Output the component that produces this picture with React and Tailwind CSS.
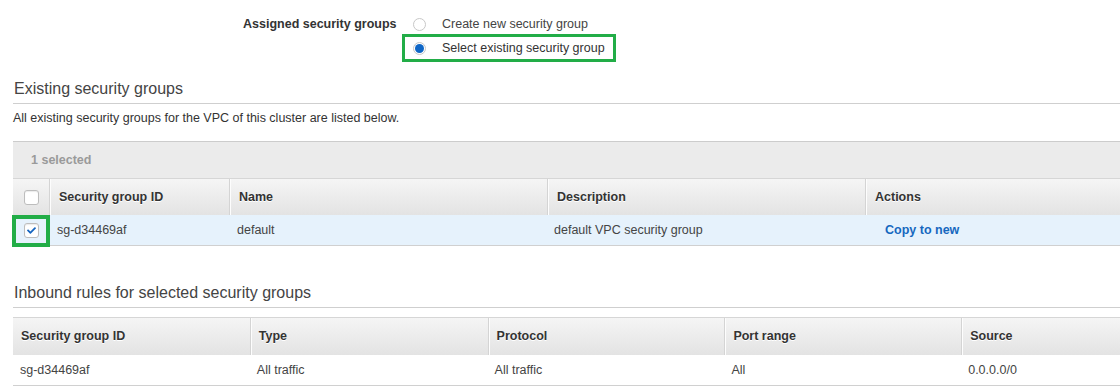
import { FaCheck } from "react-icons/fa";

const font = { fontFamily: '"Liberation Sans", Arial, sans-serif' };

const Radio = ({ checked }) => (
  <span className="w-[13px] h-[13px] rounded-full border border-[#c8c8c8] bg-white flex items-center justify-center shrink-0">
    {checked && <span className="w-[9px] h-[9px] rounded-full bg-[#0f66c6]" />}
  </span>
);

const Box = ({ checked }) => (
  <span className="w-[15px] h-[15px] rounded-[3px] border border-[#bdbdbd] bg-white flex items-center justify-center shadow-[inset_0_1px_1px_rgba(0,0,0,0.08)]">
    {checked && <FaCheck className="text-[#1565c0] text-[9px]" />}
  </span>
);

const headCell =
  "flex items-center font-bold text-[#333] [text-shadow:0_1px_0_#fff] shadow-[inset_1px_0_0_#d4d4d4,inset_2px_0_0_#fdfdfd]";

export default function App() {
  const groupCols = [
    { label: "Security group ID", w: "w-[180px]" },
    { label: "Name", w: "w-[318px]" },
    { label: "Description", w: "w-[318px]" },
    { label: "Actions", w: "w-[318px]" },
  ];
  const ruleCols = ["Security group ID", "Type", "Protocol", "Port range", "Source"];
  const ruleRow = ["sg-d34469af", "All traffic", "All traffic", "All", "0.0.0.0/0"];

  return (
    <div className="w-[1120px] h-[391px] overflow-hidden bg-white text-[12.5px] text-[#444]" style={font}>
      {/* Assigned groups */}
      <div className="flex pt-[14px] pl-[243px]">
        <div className="w-[159px] h-[20px] flex items-center font-bold text-[#333]">Assigned security groups</div>
        <div className="flex flex-col">
          <div className="h-[20px] flex items-center pl-[11px]">
            <Radio />
            <span className="ml-[16px]">Create new security group</span>
          </div>
          <div className="h-[28px] w-[214px] border-[3px] border-[#22ad47] flex items-center pl-[8px]">
            <Radio checked />
            <span className="ml-[16px] text-[#333]">Select existing security group</span>
          </div>
        </div>
      </div>

      {/* Existing security groups */}
      <div className="ml-[13px] mt-[17px]">
        <div className="text-[16px] leading-[20px] pl-[1px] pb-[4px] border-b border-[#cfcfcf]">Existing security groups</div>
        <div className="mt-[6px] leading-[16px] text-[#333]">All existing security groups for the VPC of this cluster are listed below.</div>

        <div className="mt-[15px] w-[1170px]">
          <div className="h-[37px] bg-[#ebebeb] border-t border-[#cccccc] flex items-center pl-[18px] font-bold text-[#9a9a9a]">1 selected</div>
          <div className="h-[37px] flex border-t border-[#d6d6d6] bg-gradient-to-b from-[#f5f5f5] to-[#e3e3e3]">
            <div className="w-[36px] flex items-center justify-center">
              <Box />
            </div>
            {groupCols.map((c) => (
              <div key={c.label} className={`${c.w} ${headCell} pl-[10px]`}>{c.label}</div>
            ))}
          </div>
          <div className="h-[31px] flex bg-[#e6f2fc] border-b border-[#d0d0d0]">
            <div className="w-[36px] flex items-center justify-center relative">
              <Box checked />
              <span className="absolute left-[-1px] right-[-1px] top-0 bottom-[-2px] border-[4px] border-[#22ad47]" />
            </div>
            <div className="w-[180px] flex items-center pl-[8px]">sg-d34469af</div>
            <div className="w-[318px] flex items-center pl-[8px]">default</div>
            <div className="w-[318px] flex items-center pl-[7px]">default VPC security group</div>
            <div className="w-[318px] flex items-center pl-[20px] font-bold text-[#1668bf]">Copy to new</div>
          </div>
        </div>
      </div>

      {/* Inbound rules */}
      <div className="ml-[13px] mt-[37px]">
        <div className="text-[16px] leading-[20px] pl-[1px] pb-[4px] border-b border-[#cfcfcf]">Inbound rules for selected security groups</div>
        <div className="mt-[9px] w-[1185px]">
          <div className="h-[38px] flex border-t border-[#d6d6d6] bg-gradient-to-b from-[#f5f5f5] to-[#e3e3e3]">
            {ruleCols.map((c, i) => (
              <div
                key={c}
                className={`${i === 1 ? "w-[238px]" : "w-[237px]"} ${i === 0 ? "flex items-center font-bold text-[#333] [text-shadow:0_1px_0_#fff]" : headCell} ${i === 0 ? "pl-[8px]" : "pl-[9px]"}`}
              >
                {c}
              </div>
            ))}
          </div>
          <div className="h-[31px] flex border-b border-[#d0d0d0]">
            {ruleRow.map((v, i) => (
              <div key={i} className={`${i === 1 ? "w-[238px]" : "w-[237px]"} flex items-center pl-[7px]`}>{v}</div>
            ))}
          </div>
        </div>
      </div>
    </div>
  );
}
